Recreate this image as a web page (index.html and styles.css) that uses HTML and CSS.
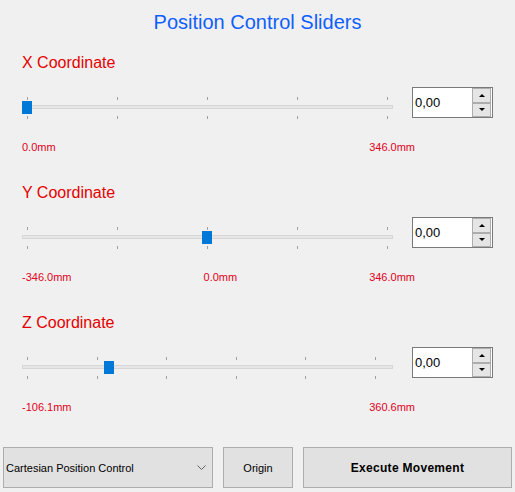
FILE: index.html
```html
<!DOCTYPE html>
<html>
<head>
<meta charset="utf-8">
<link rel="stylesheet" href="styles.css">
</head>
<body>
<div class="app">
  <h1 class="title">Position Control Sliders</h1>

  <section class="axis">
    <div class="axis-label">X Coordinate</div>
    <div class="row">
      <div class="slider">
        <div class="ticks"><i></i><i></i><i></i><i></i><i></i></div>
        <div class="track"></div>
        <div class="ticks bottom"><i></i><i></i><i></i><i></i><i></i></div>
        <div class="thumb" style="left:0px"></div>
      </div>
      <div class="spin">
        <span class="spin-value">0,00</span>
        <div class="spin-btns">
          <div class="spin-btn"><span class="arrow up"></span></div>
          <div class="spin-btn"><span class="arrow down"></span></div>
        </div>
      </div>
    </div>
    <div class="range"><span>0.0mm</span><span>346.0mm</span></div>
  </section>

  <section class="axis">
    <div class="axis-label">Y Coordinate</div>
    <div class="row">
      <div class="slider">
        <div class="ticks"><i></i><i></i><i></i><i></i><i></i></div>
        <div class="track"></div>
        <div class="ticks bottom"><i></i><i></i><i></i><i></i><i></i></div>
        <div class="thumb" style="left:180px"></div>
      </div>
      <div class="spin">
        <span class="spin-value">0,00</span>
        <div class="spin-btns">
          <div class="spin-btn"><span class="arrow up"></span></div>
          <div class="spin-btn"><span class="arrow down"></span></div>
        </div>
      </div>
    </div>
    <div class="range"><span>-346.0mm</span><span>0.0mm</span><span>346.0mm</span></div>
  </section>

  <section class="axis">
    <div class="axis-label">Z Coordinate</div>
    <div class="row">
      <div class="slider">
        <div class="ticks six"><i></i><i></i><i></i><i></i><i></i><i></i></div>
        <div class="track"></div>
        <div class="ticks six bottom"><i></i><i></i><i></i><i></i><i></i><i></i></div>
        <div class="thumb" style="left:82px"></div>
      </div>
      <div class="spin">
        <span class="spin-value">0,00</span>
        <div class="spin-btns">
          <div class="spin-btn"><span class="arrow up"></span></div>
          <div class="spin-btn"><span class="arrow down"></span></div>
        </div>
      </div>
    </div>
    <div class="range"><span>-106.1mm</span><span>360.6mm</span></div>
  </section>

  <div class="actions">
    <div class="combo">
      <span>Cartesian Position Control</span>
      <svg class="chev" width="9" height="6" viewBox="0 0 9 6"><path d="M0.5 0.5 L4.5 4.5 L8.5 0.5" fill="none" stroke="#606060" stroke-width="1"/></svg>
    </div>
    <button class="btn origin">Origin</button>
    <button class="btn execute">Execute Movement</button>
  </div>
</div>
</body>
</html>
```

FILE: styles.css
```css
html, body {
  margin: 0;
  padding: 0;
  background: #f0f0f0;
}
body {
  width: 515px;
  height: 492px;
  overflow: hidden;
  font-family: "Liberation Sans", Arial, sans-serif;
}
.app {
  display: flex;
  flex-direction: column;
}
.title {
  margin: 8px 0 0 0;
  height: 28px;
  line-height: 28px;
  font-size: 20px;
  font-weight: normal;
  text-align: center;
  color: #0f5fff;
}
.axis {
  display: flex;
  flex-direction: column;
  padding-left: 22px;
  margin-top: 17px;
}
.axis + .axis {
  margin-top: 29px;
}
.axis-label {
  height: 20px;
  line-height: 20px;
  font-size: 16px;
  color: #e60000;
}
.row {
  display: flex;
  align-items: flex-start;
  margin-top: 14px;
}
.slider {
  position: relative;
  width: 371px;
  height: 23px;
  margin-top: 10px;
  display: flex;
  flex-direction: column;
}
.ticks {
  display: flex;
  justify-content: space-between;
  margin-left: 5px;
  width: 361px;
  height: 3px;
}
.ticks.six {
  width: 349px;
}
.ticks i {
  display: block;
  width: 1px;
  height: 3px;
  background: #a0a0a0;
}
.ticks.bottom {
  margin-top: 7px;
}
.track {
  margin-top: 5px;
  height: 2px;
  border: 1px solid #d6d6d6;
  background: #e7e7e7;
}
.thumb {
  position: absolute;
  top: 4px;
  width: 10px;
  height: 13px;
  background: #0078d7;
}
.spin {
  margin-left: 19px;
  width: 79px;
  height: 29px;
  border: 1px solid #7a7a7a;
  background: #ffffff;
  display: flex;
  align-items: center;
  justify-content: space-between;
}
.spin-value {
  padding-left: 2px;
  font-size: 13px;
  color: #000;
}
.spin-btns {
  display: flex;
  flex-direction: column;
  width: 19px;
  height: 29px;
  margin-right: 1px;
  background: #f0f0f0;
}
.spin-btn {
  flex: 1;
  border: 1px solid #adadad;
  background: #e5e5e5;
  display: flex;
  align-items: center;
  justify-content: center;
}
.arrow {
  width: 0;
  height: 0;
  border-left: 3px solid transparent;
  border-right: 3px solid transparent;
}
.arrow.up {
  border-bottom: 3px solid #000;
}
.arrow.down {
  border-top: 3px solid #000;
}
.range {
  display: flex;
  justify-content: space-between;
  width: 393px;
  margin-top: 20px;
  height: 14px;
  line-height: 14px;
  font-size: 11px;
  color: #e2001c;
}
.actions {
  display: flex;
  gap: 10px;
  margin-top: 33px;
  margin-left: 3px;
}
.combo, .btn {
  box-sizing: border-box;
  height: 41px;
  border: 1px solid #adadad;
  background: #e1e1e1;
  font-family: "Liberation Sans", Arial, sans-serif;
  font-size: 11px;
  color: #000;
}
.combo {
  width: 210px;
  display: flex;
  align-items: center;
  justify-content: space-between;
  padding: 0 6px 0 2px;
}
.btn {
  padding: 0;
  margin: 0;
}
.origin {
  width: 70px;
}
.execute {
  width: 209px;
  font-weight: bold;
  font-size: 12px;
  letter-spacing: 0.3px;
}
```
